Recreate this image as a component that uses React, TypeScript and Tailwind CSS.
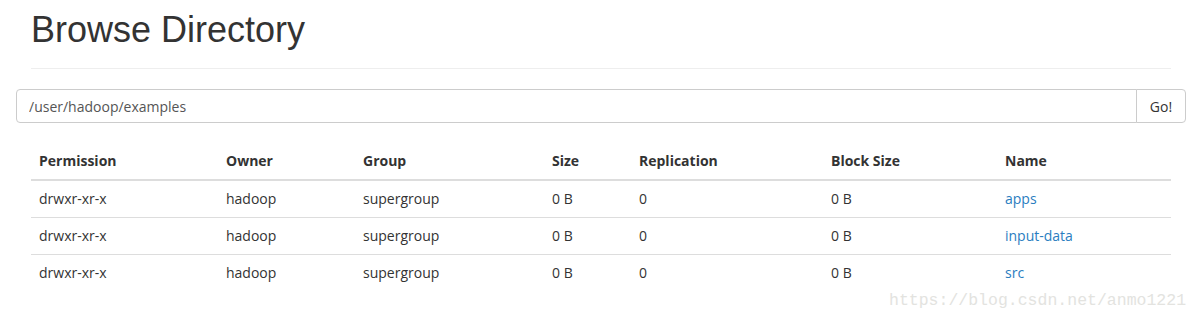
import React from "react";

type Entry = {
  permission: string;
  owner: string;
  group: string;
  size: string;
  replication: string;
  blockSize: string;
  name: string;
};

const entries: Entry[] = [
  { permission: "drwxr-xr-x", owner: "hadoop", group: "supergroup", size: "0 B", replication: "0", blockSize: "0 B", name: "apps" },
  { permission: "drwxr-xr-x", owner: "hadoop", group: "supergroup", size: "0 B", replication: "0", blockSize: "0 B", name: "input-data" },
  { permission: "drwxr-xr-x", owner: "hadoop", group: "supergroup", size: "0 B", replication: "0", blockSize: "0 B", name: "src" },
];

const columns = [
  { label: "Permission", width: "w-[187px]" },
  { label: "Owner", width: "w-[137px]" },
  { label: "Group", width: "w-[189px]" },
  { label: "Size", width: "w-[87px]" },
  { label: "Replication", width: "w-[192px]" },
  { label: "Block Size", width: "w-[174px]" },
  { label: "Name", width: "w-[174px]" },
];

const App = () => {
  return (
    <div className="relative w-[1200px] h-[323px] overflow-hidden bg-white text-[#333] font-['Open_Sans','Noto_Sans',sans-serif]">
      <div className="ml-[16px] w-[1170px]">
        {/* page header */}
        <div className="mx-[15px] border-b border-[#eee] pb-[18px] pt-[10px]">
          <h1 className="text-[36px] leading-[40px] font-normal font-['Liberation_Sans',Arial,sans-serif] text-[#333]">
            Browse Directory
          </h1>
        </div>

        {/* path input */}
        <div className="mt-[20px] flex h-[34px]">
          <input
            className="flex-1 h-full rounded-l-[4px] border border-[#ccc] px-[12px] text-[14px] text-[#555] outline-none"
            defaultValue="/user/hadoop/examples"
          />
          <button className="w-[50px] h-full -ml-px rounded-r-[4px] border border-[#ccc] bg-white text-[14px] text-[#333]">
            Go!
          </button>
        </div>

        {/* listing */}
        <div className="mx-[15px] mt-[20px]">
          <table className="w-[1140px] table-fixed border-collapse text-[14px] leading-[20px]">
            <thead>
              <tr>
                {columns.map((c) => (
                  <th
                    key={c.label}
                    className={`${c.width} p-[8px] text-left font-bold border-b-2 border-[#ddd]`}
                  >
                    {c.label}
                  </th>
                ))}
              </tr>
            </thead>
            <tbody>
              {entries.map((e, i) => (
                <tr key={e.name} className={i > 0 ? "border-t border-[#ddd]" : ""}>
                  <td className="p-[8px]">{e.permission}</td>
                  <td className="p-[8px]">{e.owner}</td>
                  <td className="p-[8px]">{e.group}</td>
                  <td className="p-[8px]">{e.size}</td>
                  <td className="p-[8px]">{e.replication}</td>
                  <td className="p-[8px]">{e.blockSize}</td>
                  <td className="p-[8px]">
                    <a href="#" className="text-[#2a7dbf]">
                      {e.name}
                    </a>
                  </td>
                </tr>
              ))}
            </tbody>
          </table>
        </div>
      </div>

      {/* watermark */}
      <div className="absolute left-[889px] top-[291px] text-[16.5px] leading-[20px] text-[#e3e3e0] font-['Liberation_Mono','Courier_New',monospace]">
        https://blog.csdn.net/anmo1221
      </div>
    </div>
  );
};

export default App;
